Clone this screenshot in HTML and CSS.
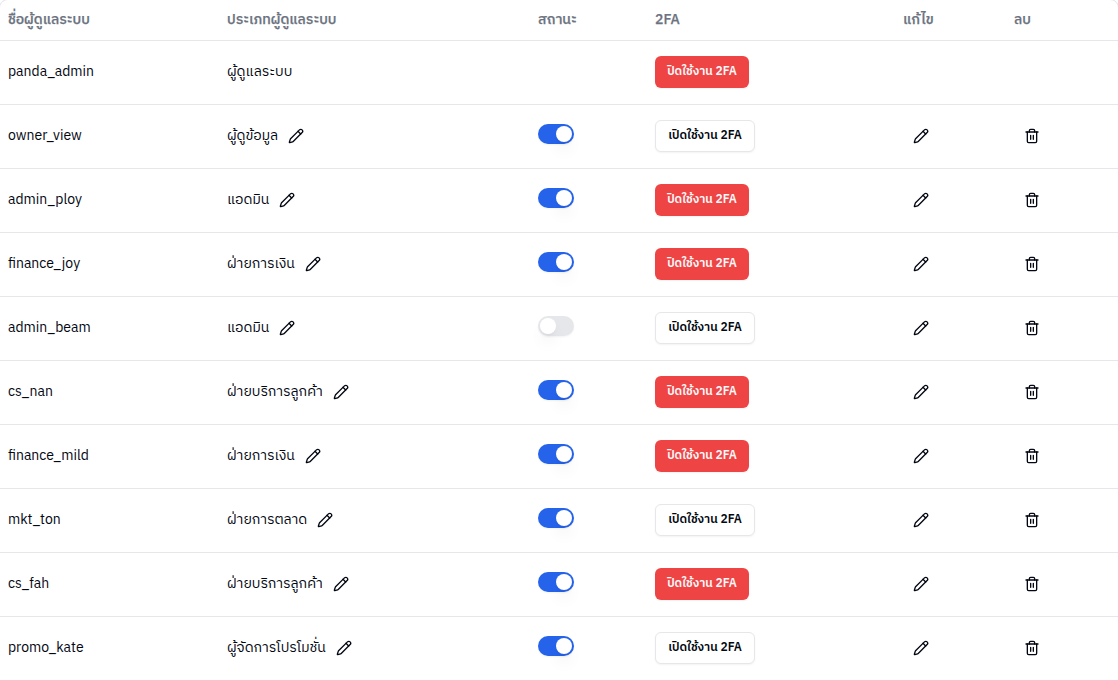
FILE: index.html
```html
<!DOCTYPE html>
<html lang="th">
<head>
  <meta charset="UTF-8">
  <meta name="viewport" content="width=device-width, initial-scale=1.0">
  <title>ผู้ดูแลระบบ</title>
  <link rel="stylesheet" href="styles.css">
</head>
<body>

  <svg class="sprite">
    <symbol id="pencil" viewBox="0 0 24 24">
      <path d="M21.174 6.812a1 1 0 0 0-3.986-3.987L3.842 16.174a2 2 0 0 0-.5.83l-1.321 4.352a.5.5 0 0 0 .623.622l4.353-1.32a2 2 0 0 0 .83-.497z"/>
      <path d="m15 5 4 4"/>
    </symbol>
    <symbol id="trash" viewBox="0 0 24 24">
      <path d="M3 6h18"/>
      <path d="M19 6v14c0 1-1 2-2 2H7c-1 0-2-1-2-2V6"/>
      <path d="M8 6V4c0-1 1-2 2-2h4c1 0 2 1 2 2v2"/>
      <path d="M10 11v6M14 11v6"/>
    </symbol>
  </svg>

  <div class="table-wrap">
    <table>
      <colgroup>
        <col class="col-name">
        <col class="col-role">
        <col class="col-status">
        <col class="col-2fa">
        <col class="col-edit">
        <col class="col-delete">
      </colgroup>
      <thead>
        <tr>
          <th>ชื่อผู้ดูแลระบบ</th>
          <th>ประเภทผู้ดูแลระบบ</th>
          <th>สถานะ</th>
          <th>2FA</th>
          <th>แก้ไข</th>
          <th>ลบ</th>
        </tr>
      </thead>
      <tbody id="admin-rows"></tbody>
    </table>
  </div>

  <script>
    // status: null = ไม่มีสวิตช์ (เจ้าของระบบ)
    const admins = [
      { name: "panda_admin", role: "ผู้ดูแลระบบ", status: null, twoFA: true },
      { name: "owner_view", role: "ผู้ดูข้อมูล", status: true, twoFA: false },
      { name: "admin_ploy", role: "แอดมิน", status: true, twoFA: true },
      { name: "finance_joy", role: "ฝ่ายการเงิน", status: true, twoFA: true },
      { name: "admin_beam", role: "แอดมิน", status: false, twoFA: false },
      { name: "cs_nan", role: "ฝ่ายบริการลูกค้า", status: true, twoFA: true },
      { name: "finance_mild", role: "ฝ่ายการเงิน", status: true, twoFA: true },
      { name: "mkt_ton", role: "ฝ่ายการตลาด", status: true, twoFA: false },
      { name: "cs_fah", role: "ฝ่ายบริการลูกค้า", status: true, twoFA: true },
      { name: "promo_kate", role: "ผู้จัดการโปรโมชั่น", status: true, twoFA: false }
    ];

    const icon = name => `<svg class="icon"><use href="#${name}"/></svg>`;
    const tableBody = document.getElementById("admin-rows");

    admins.forEach(item => {
      const editable = item.status !== null;
      const row = document.createElement("tr");
      row.innerHTML = `
        <td>${item.name}</td>
        <td><div class="role"><span>${item.role}</span>${editable ? icon("pencil") : ""}</div></td>
        <td>${editable ? `<button class="switch ${item.status ? "on" : ""}"><span class="thumb"></span></button>` : ""}</td>
        <td><button class="btn ${item.twoFA ? "btn-danger" : "btn-outline"}">${item.twoFA ? "ปิดใช้งาน 2FA" : "เปิดใช้งาน 2FA"}</button></td>
        <td>${editable ? `<button class="icon-btn">${icon("pencil")}</button>` : ""}</td>
        <td>${editable ? `<button class="icon-btn">${icon("trash")}</button>` : ""}</td>
      `;
      tableBody.appendChild(row);
    });
  </script>

</body>
</html>
```

FILE: styles.css
```css
* {
  margin: 0;
  padding: 0;
  box-sizing: border-box;
}
body {
  background: #fff;
  color: #030712;
  font-family: "IBM Plex Sans Thai", Inter, "Noto Sans", sans-serif;
  font-size: 14px;
  line-height: 20px;
  overflow: hidden;
}
button {
  font: inherit;
  color: inherit;
  border: none;
  background: none;
}
.sprite {
  display: none;
}
.table-wrap {
  height: 680px;
  overflow: hidden;
  background: #fff;
  border-radius: 8px 8px 0 0;
  box-shadow: 0 0 0 1px #e5e7eb;
}

/* Table */
table {
  width: 1118px;
  table-layout: fixed;
  border-collapse: separate;
  border-spacing: 0;
}
.col-name { width: 219px; }
.col-role { width: 311px; }
.col-status { width: 117px; }
.col-2fa { width: 248px; }
.col-edit { width: 111px; }
.col-delete { width: 112px; }

th {
  height: 41px;
  padding: 0 8px;
  text-align: left;
  font-weight: 500;
  -webkit-text-stroke: 0.25px currentColor;
  color: #6b7280;
  border-bottom: 1px solid #e5e7eb;
}
td {
  height: 64px;
  padding: 0 8px 2px;
  vertical-align: middle;
  white-space: nowrap;
  border-bottom: 1px solid #e5e7eb;
}
tr:last-child td {
  border-bottom-color: transparent;
}

.role {
  display: flex;
  align-items: center;
  gap: 10px;
}
.icon {
  display: block;
  width: 16px;
  height: 16px;
  fill: none;
  stroke: currentColor;
  stroke-width: 2;
  stroke-linecap: round;
  stroke-linejoin: round;
}
.icon-btn {
  display: flex;
  align-items: center;
  justify-content: center;
  width: 36px;
  height: 36px;
}

/* Switch */
.switch {
  display: flex;
  align-items: center;
  width: 36px;
  height: 20px;
  padding: 2px;
  margin-top: -4px;
  border-radius: 10px;
  background: #e5e7eb;
  box-shadow: 0 1px 2px rgba(0, 0, 0, 0.05);
}
.switch.on {
  justify-content: flex-end;
  background: #2563eb;
}
.thumb {
  width: 16px;
  height: 16px;
  border-radius: 50%;
  background: #fff;
  box-shadow: 0 10px 15px -3px rgba(0, 0, 0, 0.1), 0 4px 6px -4px rgba(0, 0, 0, 0.1);
}

/* 2FA buttons */
.btn {
  display: block;
  height: 32px;
  border-radius: 6px;
  font-size: 12px;
  line-height: 16px;
  font-weight: 600;
  box-shadow: 0 1px 2px rgba(0, 0, 0, 0.05);
}
.btn-danger {
  width: 94px;
  background: #ef4444;
  color: #f9fafb;
}
.btn-outline {
  width: 100px;
  background: #fff;
  border: 1px solid #e5e7eb;
}
```
